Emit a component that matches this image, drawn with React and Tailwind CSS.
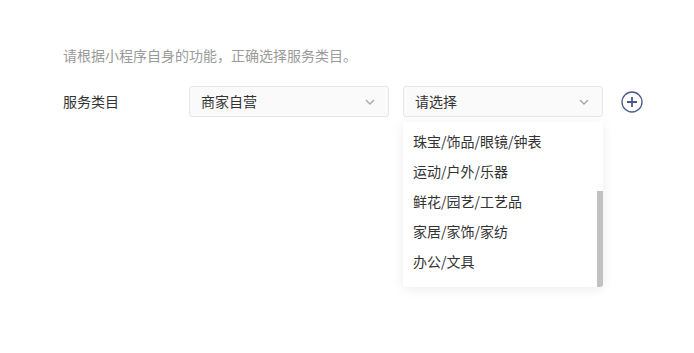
import React from 'react';

const options = ['珠宝/饰品/眼镜/钟表', '运动/户外/乐器', '鲜花/园艺/工艺品', '家居/家饰/家纺', '办公/文具'];

function Chevron() {
  return (
    <svg width="12" height="12" viewBox="0 0 12 12" fill="none" stroke="#a8a8a8" strokeWidth="1.4">
      <path d="M2 4l4 4 4-4" />
    </svg>
  );
}

export default function App() {
  return (
    <div className="w-[694px] h-[353px] bg-white pl-[63px] pt-[45px] text-[14px]" style={{ fontFamily: '"Noto Sans CJK SC", "Noto Sans", sans-serif' }}>
      <p className="leading-[20px] text-[#9a9a9a]">请根据小程序自身的功能，正确选择服务类目。</p>

      <div className="flex items-start mt-[21px]">
        <div className="w-[126px] h-[31px] flex items-center text-[#333]">服务类目</div>

        <div className="w-[200px] h-[31px] flex items-center justify-between pl-[11px] pr-[12px] bg-[#fafafa] border border-[#e6e6e6] rounded-[3px] text-[#333]">
          <span>商家自营</span>
          <Chevron />
        </div>

        <div className="relative ml-[14px]">
          <div className="w-[200px] h-[31px] flex items-center justify-between pl-[11px] pr-[12px] bg-[#fafafa] border border-[#e6e6e6] rounded-[3px] text-[#333]">
            <span>请选择</span>
            <Chevron />
          </div>

          <div className="absolute left-0 top-[36px] w-[200px] h-[165px] bg-white rounded-[3px] shadow-[0_2px_12px_rgba(0,0,0,0.08)] pt-[4px] overflow-hidden">
            {options.map((o) => (
              <div key={o} className="h-[30px] flex items-center pl-[10px] text-[#333]">{o}</div>
            ))}
            <div className="absolute right-0 top-[69px] w-[6px] h-[96px] bg-[#c1c1c1]" />
          </div>
        </div>

        <div className="h-[31px] flex items-center ml-[18px]">
          <svg width="22" height="22" viewBox="0 0 22 22" fill="none" stroke="#4a5a8c" strokeWidth="1.3">
            <circle cx="11" cy="11" r="10" />
            <path d="M11 6v10M6 11h10" strokeWidth="1.8" />
          </svg>
        </div>
      </div>
    </div>
  );
}
